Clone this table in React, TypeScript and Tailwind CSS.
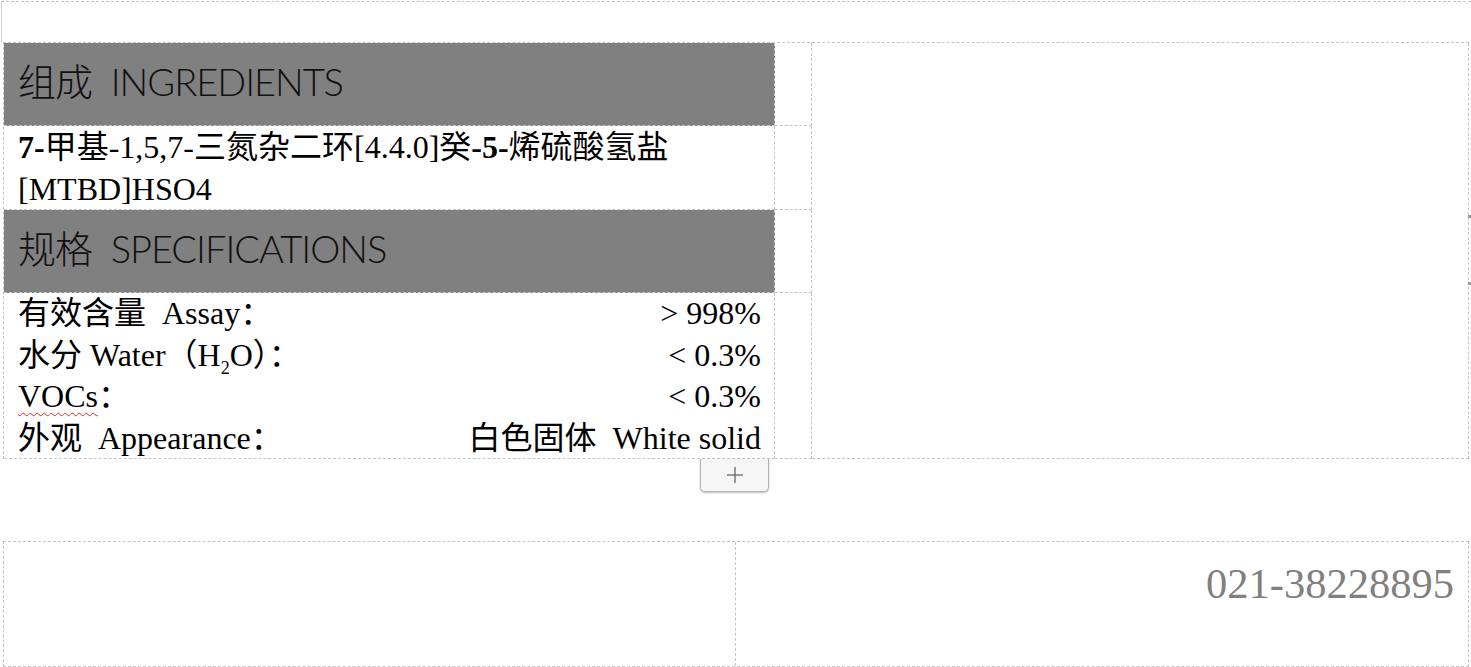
import React from "react";

const serif = "font-['Liberation_Serif','Noto_Sans_CJK_SC',serif]";

export default function App() {
  return (
    <div className="relative w-[1471px] h-[667px] bg-white overflow-hidden text-black">
      {/* top region */}
      <div className="mt-[1px] h-[41px] border-t border-dashed border-[#c4c4c4] border-l border-l-[#d0d0d0] [border-left-style:solid] ml-[1px]" />

      {/* main table */}
      <div className="ml-[3px] w-[1466px] border-t border-l border-dashed border-[#c4c4c4] grid grid-cols-[771px_37px_657px] grid-rows-[83px_84px_83px_166px]">
        {/* header 1 */}
        <div className="bg-[#808080] border-r border-b border-dashed border-[#c8c8c8] flex items-center pl-[14px] pb-[6px]">
          <span className="font-['Lato','Noto_Sans_CJK_SC',sans-serif] font-light text-[38px] leading-none tracking-[-1px] text-[#111]">
            组成&nbsp;&nbsp;INGREDIENTS
          </span>
        </div>
        <div className="border-r border-b border-dashed border-[#c4c4c4]" />
        <div className="row-span-4 border-r border-b border-dashed border-[#c4c4c4]" />

        {/* ingredient name */}
        <div className={`border-r border-b border-dashed border-[#c4c4c4] pl-[14px] ${serif} text-[32px] leading-[42px]`}>
          <div>
            <b className="font-bold">7-</b>甲基-1,5,7-三氮杂二环[4.4.0]癸<b className="font-bold">-5-</b>烯硫酸氢盐
          </div>
          <div>[MTBD]HSO4</div>
        </div>
        <div className="border-r border-b border-dashed border-[#c4c4c4]" />

        {/* header 2 */}
        <div className="bg-[#808080] border-r border-b border-dashed border-[#c8c8c8] flex items-center pl-[14px] pb-[6px]">
          <span className="font-['Lato','Noto_Sans_CJK_SC',sans-serif] font-light text-[38px] leading-none tracking-[-1px] text-[#111]">
            规格&nbsp;&nbsp;SPECIFICATIONS
          </span>
        </div>
        <div className="border-r border-b border-dashed border-[#c4c4c4]" />

        {/* specs */}
        <div className={`border-r border-b border-dashed border-[#c4c4c4] pl-[14px] pr-[13px] ${serif} text-[32px] leading-[41.5px]`}>
          <div className="flex justify-between">
            <span>有效含量&nbsp;&nbsp;Assay：</span>
            <span>&gt; 998%</span>
          </div>
          <div className="flex justify-between">
            <span>
              水分 Water（H<sub className="text-[18px] align-[-4px]">2</sub>O）：
            </span>
            <span>&lt; 0.3%</span>
          </div>
          <div className="flex justify-between">
            <span>
              <span className="underline decoration-wavy decoration-[#e03030] decoration-1 underline-offset-[5px]">VOCs</span>：
            </span>
            <span>&lt; 0.3%</span>
          </div>
          <div className="flex justify-between">
            <span>外观&nbsp;&nbsp;Appearance：</span>
            <span>白色固体&nbsp;&nbsp;White solid</span>
          </div>
        </div>
        <div className="border-r border-b border-dashed border-[#c4c4c4]" />
      </div>

      {/* bottom table */}
      <div className="mt-[82px] ml-[3px] w-[1466px] h-[126px] border border-dashed border-[#c4c4c4] grid grid-cols-[732px_1fr]">
        <div className="border-r border-dashed border-[#c4c4c4]" />
        <div className={`pt-[18px] pr-[14px] text-right ${serif} text-[42.5px] leading-[48px] text-[#808080]`}>
          021-38228895
        </div>
      </div>

      {/* add-row button overlay */}
      <div className="absolute left-[700px] top-[459px] w-[69px] h-[33px] bg-[#f6f6f6] border border-t-0 border-[#b4b4b4] rounded-b-[5px] shadow-[0_1px_2px_rgba(0,0,0,0.25)] flex items-center justify-center">
        <svg width="18" height="18" viewBox="0 0 18 18">
          <line x1="1" y1="9" x2="17" y2="9" stroke="#666" strokeWidth="1.3" />
          <line x1="9" y1="1" x2="9" y2="17" stroke="#666" strokeWidth="1.3" />
        </svg>
      </div>

      {/* tiny handles at right edge */}
      <div className="absolute left-[1468px] top-[215px] w-[3px] h-[3px] bg-[#999]" />
      <div className="absolute left-[1468px] top-[282px] w-[3px] h-[3px] bg-[#999]" />
    </div>
  );
}
